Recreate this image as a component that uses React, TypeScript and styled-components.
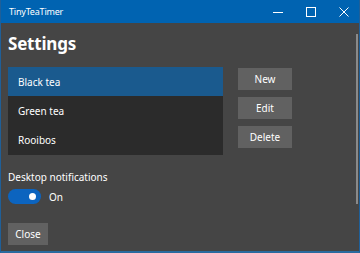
import React, { useState } from "react";
import styled, { createGlobalStyle } from "styled-components";

const GlobalStyle = createGlobalStyle`
  html, body {
    margin: 0;
    padding: 0;
    background: #454545;
  }
  * {
    box-sizing: border-box;
  }
`;

const teas = ["Black tea", "Green tea", "Rooibos"];

const Window = styled.div`
  position: relative;
  width: 360px;
  height: 253px;
  display: flex;
  flex-direction: column;
  background: #454545;
  border-left: 1px solid #1f5f98;
  border-right: 1px solid #1f5f98;
  border-bottom: 2px solid #2a6a9e;
  font-family: "Noto Sans", "Open Sans", sans-serif;
  color: #ffffff;
  overflow: hidden;
`;

const TitleBar = styled.div`
  height: 23px;
  flex-shrink: 0;
  display: flex;
  align-items: center;
  background: #0063b1;
  padding-left: 9px;
  margin: 0 -1px;
`;

const AppName = styled.span`
  font-size: 9px;
  letter-spacing: -0.2px;
  flex: 1;
`;

const Caption = styled.div`
  width: 33px;
  height: 23px;
  display: flex;
  align-items: center;
  justify-content: center;
`;

const Content = styled.div`
  flex: 1;
  display: flex;
  flex-direction: column;
  padding: 0 8px 0 7px;
`;

const Heading = styled.h1`
  margin: 9px 0 0;
  height: 35px;
  font-size: 17px;
  letter-spacing: -0.2px;
  font-weight: 700;
  line-height: 24px;
`;

const Body = styled.div`
  display: grid;
  grid-template-columns: 215px 54px;
  column-gap: 15px;
  align-items: start;
`;

const List = styled.div`
  background: #2b2b2b;
  height: 88px;
`;

const Row = styled.div<{ $selected: boolean }>`
  height: 29px;
  display: flex;
  align-items: center;
  padding-left: 10px;
  font-size: 10px;
  background: ${(p) => (p.$selected ? "#1a5a8e" : "transparent")};
`;

const Buttons = styled.div`
  display: flex;
  flex-direction: column;
  gap: 7px;
  padding-top: 1px;
`;

const Button = styled.button<{ $width?: number }>`
  width: ${(p) => p.$width ?? 54}px;
  height: 22px;
  border: none;
  padding: 0;
  background: #616161;
  color: #ffffff;
  font-family: inherit;
  font-size: 10px;
`;

const Label = styled.div`
  margin-top: 14px;
  font-size: 10px;
  line-height: 16px;
`;

const ToggleRow = styled.div`
  display: flex;
  align-items: center;
  gap: 8px;
  margin-top: 4px;
  font-size: 10px;
`;

const Toggle = styled.div<{ $on: boolean }>`
  position: relative;
  width: 33px;
  height: 15px;
  border-radius: 8px;
  background: ${(p) => (p.$on ? "#0c64bf" : "#888")};
`;

const Knob = styled.div<{ $on: boolean }>`
  position: absolute;
  top: 4px;
  left: ${(p) => (p.$on ? 21 : 4)}px;
  width: 7px;
  height: 7px;
  border-radius: 50%;
  background: #ffffff;
`;

const Footer = styled.div`
  margin-top: 17px;
`;

const Scrollbar = styled.div`
  position: absolute;
  right: 1px;
  top: 34px;
  width: 2px;
  height: 170px;
  background: #8a8a8a;
`;

const App = () => {
  const [selected, setSelected] = useState(0);
  const [notify, setNotify] = useState(true);

  return (
    <Window>
      <GlobalStyle />
      <TitleBar>
        <AppName>TinyTeaTimer</AppName>
        <Caption>
          <svg width="10" height="10" viewBox="0 0 10 10">
            <path d="M0 5.5h10" stroke="#fff" strokeWidth="1" />
          </svg>
        </Caption>
        <Caption>
          <svg width="10" height="10" viewBox="0 0 10 10">
            <rect x="0.5" y="0.5" width="9" height="9" fill="none" stroke="#fff" strokeWidth="1" />
          </svg>
        </Caption>
        <Caption>
          <svg width="10" height="10" viewBox="0 0 10 10">
            <path d="M0.5 0.5l9 9M9.5 0.5l-9 9" stroke="#fff" strokeWidth="1" />
          </svg>
        </Caption>
      </TitleBar>
      <Content>
        <Heading>Settings</Heading>
        <Body>
          <List>
            {teas.map((tea, i) => (
              <Row key={tea} $selected={i === selected} onClick={() => setSelected(i)}>
                {tea}
              </Row>
            ))}
          </List>
          <Buttons>
            <Button>New</Button>
            <Button>Edit</Button>
            <Button>Delete</Button>
          </Buttons>
        </Body>
        <Label>Desktop notifications</Label>
        <ToggleRow>
          <Toggle $on={notify} onClick={() => setNotify((n) => !n)}>
            <Knob $on={notify} />
          </Toggle>
          {notify ? "On" : "Off"}
        </ToggleRow>
        <Footer>
          <Button $width={40}>Close</Button>
        </Footer>
      </Content>
      <Scrollbar />
    </Window>
  );
};

export default App;
